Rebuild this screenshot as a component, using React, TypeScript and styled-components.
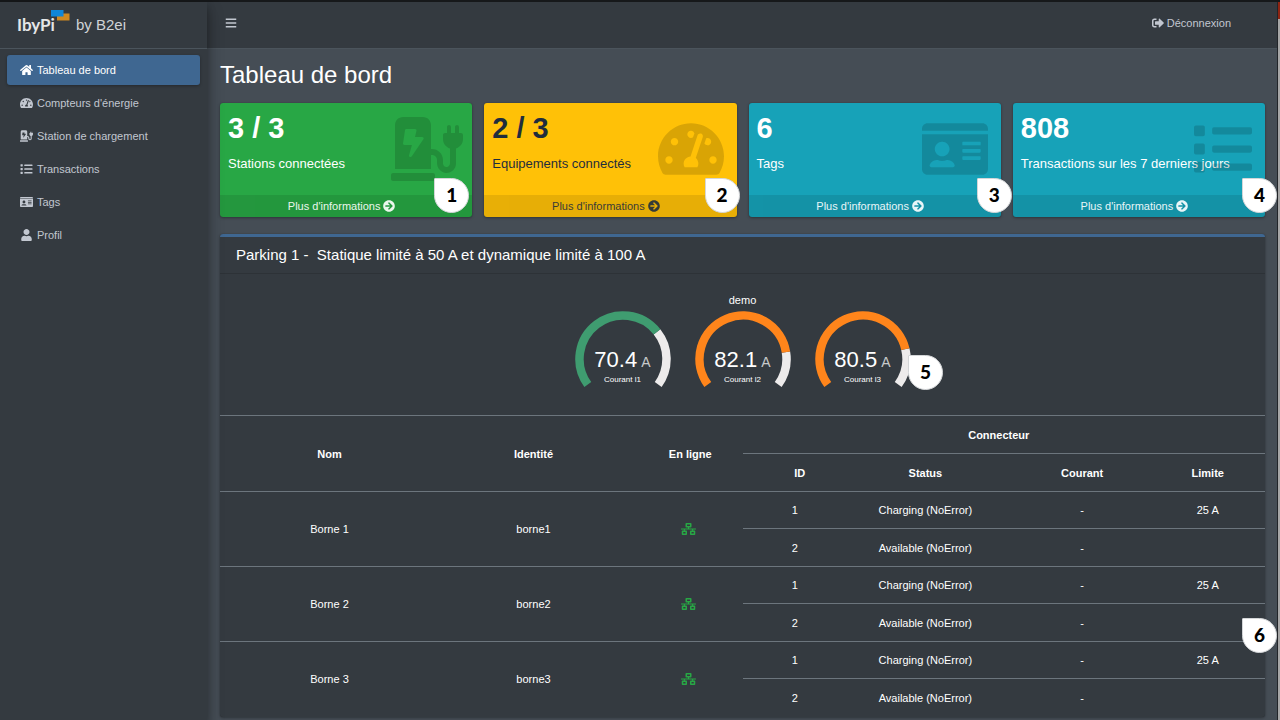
import React from 'react';
import styled, { createGlobalStyle } from 'styled-components';
import type { IconType } from 'react-icons';
import {
  FaArrowCircleRight,
  FaBars,
  FaChargingStation,
  FaHome,
  FaIdCard,
  FaList,
  FaNetworkWired,
  FaSignOutAlt,
  FaTachometerAlt,
  FaUser,
} from 'react-icons/fa';

const GlobalStyle = createGlobalStyle`
  *, *::before, *::after { box-sizing: border-box; }
  body {
    margin: 0;
    background: #454d55;
    color: #fff;
    font: 11px/16px "Liberation Sans", Arial, sans-serif;
  }
  a { color: inherit; text-decoration: none; }
  h1, h2, p { margin: 0; font-weight: 400; }
`;

const Shell = styled.div`
  display: flex;
  min-height: 100vh;
  border-top: 2px solid #16181a;
`;

const Sidebar = styled.aside`
  flex: 0 0 207px;
  background: #343a40;
  box-shadow: 0 8px 16px rgba(0, 0, 0, 0.3), 0 4px 8px rgba(0, 0, 0, 0.25);
  z-index: 1;
`;

const Brand = styled.a`
  display: flex;
  align-items: center;
  gap: 6px;
  height: 47px;
  padding-left: 17px;
  border-bottom: 1px solid #4b545c;
  color: #d0d3d6;
  font-size: 15px;
`;

const Logo = styled.span`
  display: flex;
  width: 53px;
  color: #e4e6e8;
  font: 700 17px/24px Lato, sans-serif;
`;

const LogoMark = styled.svg`
  flex: none;
  width: 19px;
  height: 11px;
  margin: -3px 0 0 -4px;
`;

const Nav = styled.nav`
  display: flex;
  flex-direction: column;
  gap: 3px;
  padding: 6px 7px;
`;

const NavLink = styled.a<{ $active?: boolean }>`
  display: flex;
  align-items: center;
  gap: 4px;
  height: 30px;
  padding-left: 13px;
  border-radius: 3px;
  color: ${(p) => (p.$active ? '#fff' : '#c2c7d0')};
  background: ${(p) => (p.$active ? '#3f6791' : 'transparent')};
  box-shadow: ${(p) => (p.$active ? '0 1px 3px rgba(0, 0, 0, 0.3)' : 'none')};
  svg { width: 13px; height: 12px; }
`;

const Main = styled.div`
  flex: 1;
  min-width: 0;
`;

const Navbar = styled.header`
  display: flex;
  align-items: center;
  justify-content: space-between;
  height: 47px;
  padding: 0 46px 4px 18px;
  border-bottom: 1px solid #4b545c;
  background: #343a40;
  color: #c2c7d0;
`;

const MenuButton = styled.button`
  display: flex;
  padding: 0;
  border: 0;
  background: none;
  color: inherit;
  font-size: 12px;
`;

const Logout = styled.a`
  display: flex;
  align-items: center;
  gap: 3px;
  svg { font-size: 12px; }
`;

const Content = styled.main`
  padding: 12px 12px 4px 13px;
`;

const Title = styled.h1`
  font-size: 24px;
  line-height: 28px;
`;

const Cards = styled.section`
  display: grid;
  grid-template-columns: repeat(4, 1fr);
  gap: 12px;
  margin-top: 14px;
`;

const tones = {
  green: ['#28a745', '#fff'],
  yellow: ['#ffc107', '#1f2d3d'],
  teal: ['#17a2b8', '#fff'],
};
type Tone = keyof typeof tones;

const Card = styled.article<{ $tone: Tone }>`
  position: relative;
  border-radius: 3px;
  background: ${(p) => tones[p.$tone][0]};
  color: ${(p) => tones[p.$tone][1]};
  box-shadow: 0 0 1px rgba(0, 0, 0, 0.3), 0 1px 3px rgba(0, 0, 0, 0.3);
`;

const CardBody = styled.div`
  height: 92px;
  padding: 7px 8px;
`;

const CardValue = styled.p`
  font-size: 29px;
  font-weight: 700;
  line-height: 36px;
`;

const CardLabel = styled.p`
  margin-top: 9px;
  font-size: 13px;
  line-height: 18px;
`;

const CardIcon = styled.span<{ $width: number }>`
  position: absolute;
  top: 0;
  right: ${(p) => (p.$width > 70 ? 9 : 13)}px;
  display: flex;
  align-items: center;
  height: 91px;
  color: rgba(0, 0, 0, 0.15);
  svg { width: ${(p) => p.$width}px; height: 66px; }
`;

const CardLink = styled.a`
  display: flex;
  align-items: center;
  justify-content: center;
  gap: 3px;
  height: 22px;
  padding-right: 9px;
  border-radius: 0 0 3px 3px;
  background: rgba(0, 0, 0, 0.1);
  opacity: 0.9;
  svg { font-size: 12px; }
`;

const Marker = styled.span<{ $right: number; $bottom: number }>`
  position: absolute;
  right: ${(p) => p.$right}px;
  bottom: ${(p) => p.$bottom}px;
  width: 35px;
  height: 35px;
  border: 1px solid #d4d6d8;
  border-radius: 1px 50% 50% 50%;
  background: #fff;
  color: #000;
  font: 900 19px/31px Lato, sans-serif;
  text-align: center;
`;

const Panel = styled.section`
  position: relative;
  margin-top: 17px;
  border-top: 3px solid #3f6791;
  border-radius: 3px;
  background: #343a40;
  box-shadow: 0 0 1px rgba(0, 0, 0, 0.3), 0 1px 3px rgba(0, 0, 0, 0.3);
`;

const PanelTitle = styled.h2`
  padding: 8px 16px;
  border-bottom: 1px solid rgba(0, 0, 0, 0.13);
  font-size: 15px;
  line-height: 20px;
  white-space: pre-wrap;
`;

const GaugeArea = styled.div`
  height: 141px;
  padding-top: 18px;
  text-align: center;
`;

const Gauges = styled.div`
  display: flex;
  justify-content: center;
  gap: 24px;
  margin-top: 3px;
`;

const GaugeBox = styled.figure`
  position: relative;
  width: 96px;
  height: 80px;
  margin: 0;
`;

const GaugeText = styled.figcaption`
  position: absolute;
  inset: 35px 0 auto;
`;

const Reading = styled.div`
  font-size: 22px;
  line-height: 28px;
  white-space: nowrap;
  small { margin-left: -2px; color: #c8cacc; font-size: 14px; }
`;

const Caption = styled.div`
  font-size: 8px;
  line-height: 8px;
`;

const Table = styled.table`
  width: 100%;
  table-layout: fixed;
  border-collapse: collapse;
  text-align: center;
  th, td {
    padding: 0 10px;
    border-top: 1px solid #6c757d;
  }
  thead tr { height: 38px; }
  th:first-child, td[rowspan]:first-child { padding-left: 20px; }
  th:last-child, td:last-child { padding-right: 20px; }
  td[rowspan]:nth-child(3) { padding-right: 14px; }
`;

const ConnectorRow = styled.tr<{ $height: number }>`
  height: ${(p) => p.$height}px;
`;

const Online = styled(FaNetworkWired)`
  display: block;
  width: 15px;
  height: 12px;
  margin: 0 auto;
  color: #28a745;
`;

const ScreenEdge = styled.div`
  display: flex;
  flex-direction: column;
  flex: 0 0 3px;
  border-left: 1px solid #222529;
  background: #a6a6a6;
  &::before { content: ''; height: 17px; background: #8e2412; }
`;

const links: [string, IconType][] = [
  ['Tableau de bord', FaHome],
  ["Compteurs d'énergie", FaTachometerAlt],
  ['Station de chargement', FaChargingStation],
  ['Transactions', FaList],
  ['Tags', FaIdCard],
  ['Profil', FaUser],
];

const cards: { value: string; label: string; tone: Tone; icon: IconType; width: number; marker: number }[] = [
  { value: '3 / 3', label: 'Stations connectées', tone: 'green', icon: FaChargingStation, width: 72, marker: 3 },
  { value: '2 / 3', label: 'Equipements connectés', tone: 'yellow', icon: FaTachometerAlt, width: 66, marker: -3 },
  { value: '6', label: 'Tags', tone: 'teal', icon: FaIdCard, width: 66, marker: -11 },
  { value: '808', label: 'Transactions sur les 7 derniers jours', tone: 'teal', icon: FaList, width: 58, marker: -12 },
];

const gauges = [
  { value: 70.4, label: 'Courant l1', color: '#3f9c70' },
  { value: 82.1, label: 'Courant l2', color: '#ff851b' },
  { value: 80.5, label: 'Courant l3', color: '#ff851b' },
];

const SWEEP = 252;

function arc(from: number, to: number) {
  const point = (pct: number) => {
    const a = ((-SWEEP / 2 + (pct / 100) * SWEEP) * Math.PI) / 180;
    return `${48 + 43.5 * Math.sin(a)} ${48 - 43.5 * Math.cos(a)}`;
  };
  const large = ((to - from) / 100) * SWEEP > 180 ? 1 : 0;
  return `M${point(from)}A43.5 43.5 0 ${large} 1 ${point(to)}`;
}

function Gauge({ value, label, color }: { value: number; label: string; color: string }) {
  return (
    <GaugeBox>
      <svg width="96" height="80" viewBox="0 0 96 80" fill="none" strokeWidth="8.5" aria-hidden="true">
        <path d={arc(value, 100)} stroke="#edebeb" />
        <path d={arc(0, value)} stroke={color} />
      </svg>
      <GaugeText>
        <Reading>
          {value} <small>A</small>
        </Reading>
        <Caption>{label}</Caption>
      </GaugeText>
    </GaugeBox>
  );
}

export default function App() {
  return (
    <>
      <GlobalStyle />
      <Shell>
        <Sidebar>
          <Brand href="#">
            <Logo>
              IbyPi
              <LogoMark viewBox="0 0 19 11" aria-hidden="true">
                <path d="M6 3.500H18.500V10.500H6z" fill="#cf8820" />
                <path d="M0 0H12.500V6.500H0z" fill="#0f86d8" />
              </LogoMark>
            </Logo>
            by B2ei
          </Brand>
          <Nav>
            {links.map(([label, Icon], i) => (
              <NavLink href="#" key={label} $active={i === 0}>
                <Icon />
                {label}
              </NavLink>
            ))}
          </Nav>
        </Sidebar>
        <Main>
          <Navbar>
            <MenuButton type="button" aria-label="Menu">
              <FaBars />
            </MenuButton>
            <Logout href="#">
              <FaSignOutAlt />
              Déconnexion
            </Logout>
          </Navbar>
          <Content>
            <Title>Tableau de bord</Title>
            <Cards>
              {cards.map(({ value, label, tone, icon: Icon, width, marker }, i) => (
                <Card $tone={tone} key={label}>
                  <CardBody>
                    <CardValue>{value}</CardValue>
                    <CardLabel>{label}</CardLabel>
                  </CardBody>
                  <CardIcon $width={width}>
                    <Icon />
                  </CardIcon>
                  <CardLink href="#">
                    Plus d'informations <FaArrowCircleRight />
                  </CardLink>
                  <Marker $right={marker} $bottom={4}>
                    {i + 1}
                  </Marker>
                </Card>
              ))}
            </Cards>
            <Panel>
              <PanelTitle>{'Parking 1 -  Statique limité à 50 A et dynamique limité à 100 A'}</PanelTitle>
              <GaugeArea>
                demo
                <Gauges>
                  {gauges.map((g) => (
                    <Gauge key={g.label} {...g} />
                  ))}
                </Gauges>
              </GaugeArea>
              <Table>
                <colgroup>
                  {['20%', '20%', '10%', '10%', '15%', '15%', '10%'].map((width, i) => (
                    <col key={i} style={{ width }} />
                  ))}
                </colgroup>
                <thead>
                  <tr>
                    <th rowSpan={2}>Nom</th>
                    <th rowSpan={2}>Identité</th>
                    <th rowSpan={2}>En ligne</th>
                    <th colSpan={4}>Connecteur</th>
                  </tr>
                  <tr>
                    <th>ID</th>
                    <th>Status</th>
                    <th>Courant</th>
                    <th>Limite</th>
                  </tr>
                </thead>
                <tbody>
                  {[1, 2, 3].map((n) => (
                    <React.Fragment key={n}>
                      <ConnectorRow $height={37}>
                        <td rowSpan={2}>Borne {n}</td>
                        <td rowSpan={2}>borne{n}</td>
                        <td rowSpan={2}>
                          <Online title="En ligne" />
                        </td>
                        <td>1</td>
                        <td>Charging (NoError)</td>
                        <td>-</td>
                        <td>25 A</td>
                      </ConnectorRow>
                      <ConnectorRow $height={38}>
                        <td>2</td>
                        <td>Available (NoError)</td>
                        <td>-</td>
                        <td />
                      </ConnectorRow>
                    </React.Fragment>
                  ))}
                </tbody>
              </Table>
              <Marker $right={322} $bottom={327}>
                5
              </Marker>
              <Marker $right={-12} $bottom={64}>
                6
              </Marker>
            </Panel>
          </Content>
        </Main>
        <ScreenEdge />
      </Shell>
    </>
  );
}
